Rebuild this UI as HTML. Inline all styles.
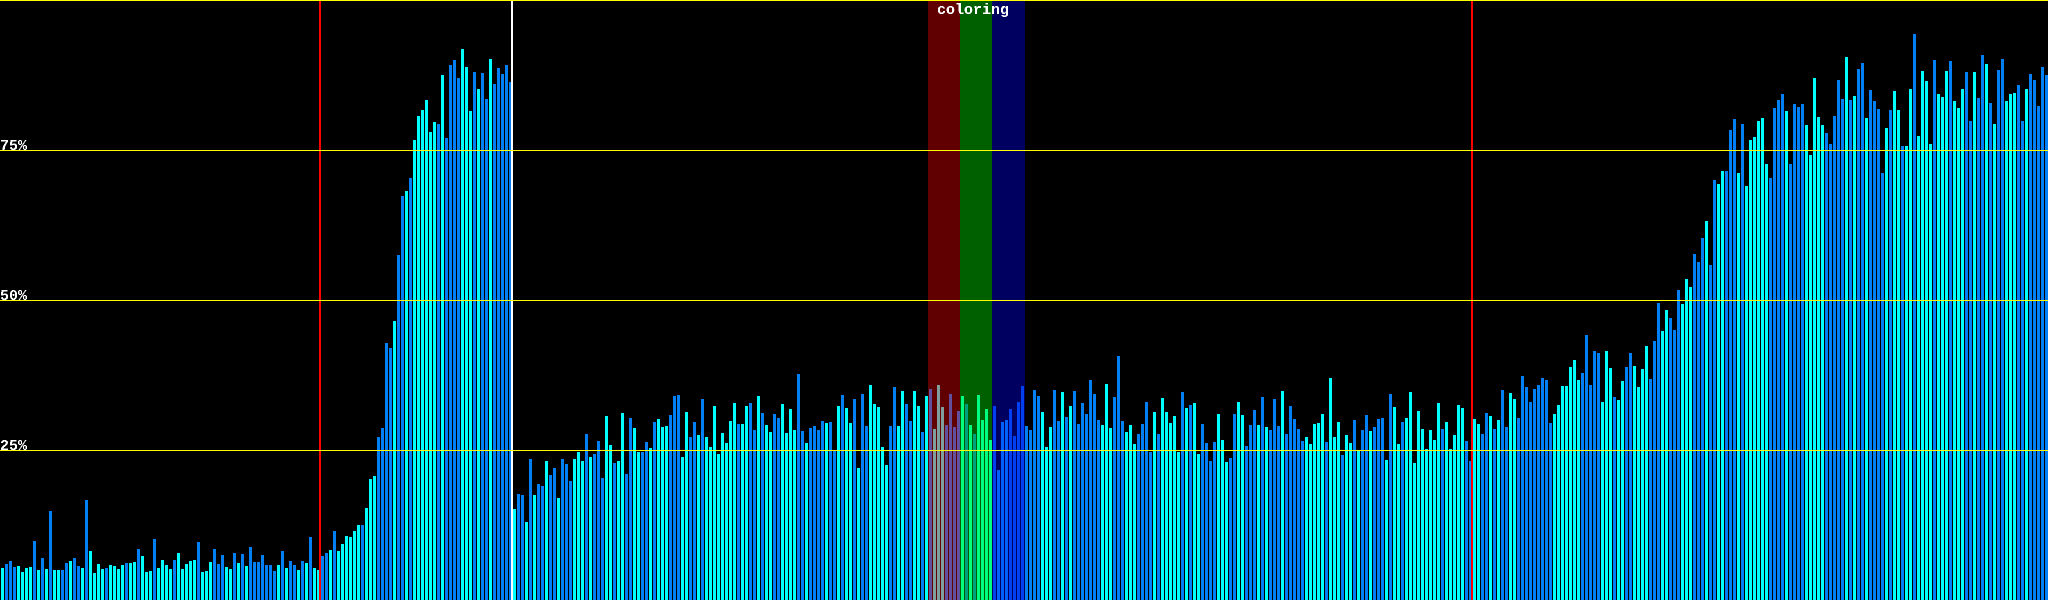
<!DOCTYPE html>
<html lang="en"><head><meta charset="utf-8"><title>coloring</title>
<style>
html,body{margin:0;padding:0;background:#000;width:2048px;height:600px;overflow:hidden}
svg{display:block;position:absolute;left:0;top:0}
text{font-family:"Liberation Mono",monospace;font-size:15px;font-weight:bold;fill:#fff}
</style></head><body>
<svg width="2048" height="600" viewBox="0 0 2048 600" xmlns="http://www.w3.org/2000/svg">
<defs><filter id="t" x="0" y="0" width="100%" height="100%" color-interpolation-filters="sRGB"><feComponentTransfer><feFuncA type="discrete" tableValues="0 1"/></feComponentTransfer></filter></defs>
<rect width="2048" height="600" fill="#000"/>
<rect x="928" y="1" width="32" height="599" fill="#600000"/>
<rect x="960" y="1" width="32" height="599" fill="#006000"/>
<rect x="992" y="1" width="33" height="599" fill="#000060"/>
<g transform="translate(2.5 0)" fill="none" stroke-width="3" shape-rendering="crispEdges">
<path stroke="#00ffff" d="M0 568V600M16 566V600M20 572V600M24 568V600M28 567V600M36 570V600M44 569V600M52 570V600M56 570V600M68 561V600M80 568V600M88 551V600M92 573V600M96 564V600M100 569V600M108 565V600M112 566V600M116 569V600M120 565V600M128 563V600M132 562V600M140 556V600M144 572V600M148 571V600M156 568V600M160 560V600M164 565V600M168 569V600M176 553V600M180 569V600M184 564V600M188 561V600M192 560V600M200 572V600M204 571V600M208 562V600M224 567V600M228 569V600M236 563V600M244 566V600M276 565V600M284 568V600M296 570V600M304 563V600M312 568V600M316 570V600M328 550V600M336 551V600M340 544V600M344 536V600M348 537V600M352 531V600M356 525V600M364 508V600M368 479V600M372 476V600M392 321V600M404 191V600M412 140V600M416 116V600M420 110V600M424 100V600M428 132V600M432 122V600M440 75V600M460 49V600M464 67V600M468 111V600M476 89V600M488 59V600M512 509V600M524 522V600M532 495V600M544 461V600M556 498V600M572 459V600M576 452V600M580 461V600M588 457V600M604 416V600M608 445V600M616 461V600M620 413V600M632 428V600M636 452V600M648 448V600M656 419V600M660 427V600M664 426V600M680 457V600M684 412V600M696 435V600M704 437V600M708 447V600M712 406V600M716 454V600M720 433V600M724 443V600M728 421V600M732 403V600M740 424V600M744 406V600M756 396V600M764 425V600M768 432V600M780 404V600M784 433V600M788 409V600M792 430V600M804 443V600M824 423V600M836 406V600M844 408V600M848 423V600M856 468V600M868 385V600M872 404V600M876 407V600M880 447V600M884 465V600M896 426V600M900 391V600M912 391V600M916 406V600M924 396V600M1040 412V600M1044 447V600M1048 427V600M1060 392V600M1068 406V600M1100 425V600M1104 384V600M1108 428V600M1124 432V600M1128 425V600M1132 444V600M1152 412V600M1160 398V600M1164 412V600M1168 423V600M1172 416V600M1176 452V600M1184 408V600M1192 403V600M1196 454V600M1216 414V600M1220 440V600M1224 462V600M1236 402V600M1240 415V600M1256 425V600M1264 427V600M1280 391V600M1304 437V600M1308 444V600M1312 424V600M1316 423V600M1320 414V600M1328 378V600M1332 437V600M1336 422V600M1344 435V600M1348 443V600M1356 450V600M1368 431V600M1384 460V600M1392 407V600M1396 444V600M1404 418V600M1408 392V600M1412 463V600M1416 411V600M1420 429V600M1424 449V600M1428 430V600M1432 440V600M1436 403V600M1444 422V600M1448 449V600M1452 435V600M1456 405V600M1460 408V600M1472 419V600M1476 424V600M1488 416V600M1496 420V600M1508 393V600M1512 399V600M1552 414V600M1556 405V600M1560 386V600M1564 386V600M1568 367V600M1572 360V600M1576 380V600M1600 402V600M1604 351V600M1608 368V600M1616 400V600M1620 381V600M1632 366V600M1636 387V600M1640 369V600M1644 346V600M1660 331V600M1664 310V600M1680 304V600M1684 279V600M1688 287V600M1704 221V600M1716 184V600M1720 171V600M1736 173V600M1744 186V600M1748 140V600M1752 137V600M1756 121V600M1760 118V600M1764 164V600M1784 111V600M1804 125V600M1808 155V600M1812 78V600M1816 117V600M1820 125V600M1844 57V600M1852 96V600M1864 118V600M1884 128V600M1892 91V600M1896 110V600M1904 146V600M1908 89V600M1916 136V600M1920 71V600M1924 81V600M1928 144V600M1936 94V600M1940 97V600M1944 71V600M1952 101V600M1956 108V600M1960 89V600M1972 72V600M1984 64V600M1992 124V600M2004 101V600M2008 94V600M2012 93V600M2024 89V600"/>
<path stroke="#0080f4" d="M4 564V600M8 561V600M12 567V600M32 541V600M40 558V600M48 511V600M60 570V600M64 563V600M72 558V600M76 566V600M84 500V600M104 568V600M124 563V600M136 549V600M152 539V600M172 560V600M196 542V600M212 549V600M216 564V600M220 555V600M232 553V600M240 554V600M248 547V600M252 562V600M256 562V600M260 555V600M264 565V600M268 565V600M272 571V600M280 551V600M288 561V600M292 565V600M300 561V600M308 537V600M320 556V600M324 553V600M332 531V600M360 525V600M376 437V600M380 428V600M384 343V600M388 348V600M396 255V600M400 196V600M408 178V600M436 124V600M444 138V600M448 65V600M452 60V600M456 78V600M472 72V600M480 73V600M484 99V600M492 84V600M496 68V600M500 74V600M504 65V600M508 82V600M516 494V600M520 495V600M528 459V600M536 484V600M540 486V600M548 475V600M552 468V600M560 459V600M564 464V600M568 481V600M584 434V600M592 454V600M596 441V600M600 478V600M612 463V600M624 474V600M628 418V600M640 452V600M644 442V600M652 422V600M668 415V600M672 396V600M676 395V600M688 437V600M692 422V600M700 399V600M736 424V600M748 403V600M752 430V600M760 413V600M772 414V600M776 418V600M796 374V600M800 431V600M808 428V600M812 426V600M816 430V600M820 421V600M828 422V600M832 451V600M840 395V600M852 399V600M860 394V600M864 426V600M888 426V600M892 387V600M904 404V600M908 421V600M920 432V600M1024 426V600M1028 430V600M1032 390V600M1036 396V600M1052 390V600M1056 421V600M1064 417V600M1072 391V600M1076 424V600M1080 403V600M1084 414V600M1088 380V600M1092 394V600M1096 420V600M1112 397V600M1116 356V600M1120 421V600M1136 434V600M1140 424V600M1144 402V600M1148 452V600M1156 434V600M1180 392V600M1188 405V600M1200 424V600M1204 443V600M1208 461V600M1212 442V600M1228 458V600M1232 414V600M1244 446V600M1248 425V600M1252 410V600M1260 397V600M1268 430V600M1272 399V600M1276 426V600M1284 434V600M1288 406V600M1292 419V600M1296 429V600M1300 441V600M1324 442V600M1340 455V600M1352 420V600M1360 430V600M1364 415V600M1372 427V600M1376 419V600M1380 418V600M1388 394V600M1400 422V600M1440 429V600M1464 441V600M1468 461V600M1480 434V600M1484 413V600M1492 429V600M1500 390V600M1504 427V600M1516 418V600M1520 376V600M1524 387V600M1528 402V600M1532 389V600M1536 385V600M1540 378V600M1544 380V600M1548 423V600M1580 373V600M1584 335V600M1588 385V600M1592 351V600M1596 353V600M1612 397V600M1624 367V600M1628 353V600M1648 379V600M1652 341V600M1656 303V600M1668 318V600M1672 330V600M1676 290V600M1692 254V600M1696 262V600M1700 238V600M1708 265V600M1712 180V600M1724 171V600M1728 130V600M1732 119V600M1740 124V600M1768 178V600M1772 108V600M1776 100V600M1780 94V600M1788 164V600M1792 104V600M1796 107V600M1800 104V600M1824 133V600M1828 144V600M1832 116V600M1836 80V600M1840 99V600M1848 100V600M1856 69V600M1860 63V600M1868 90V600M1872 101V600M1876 109V600M1880 173V600M1888 110V600M1900 146V600M1912 34V600M1932 60V600M1948 61V600M1964 72V600M1968 121V600M1976 98V600M1980 55V600M1988 103V600M1996 70V600M2000 59V600M2016 85V600M2020 121V600M2028 74V600M2032 80V600M2036 106V600M2040 67V600M2044 75V600"/>
<path stroke="#7f9f9f" d="M932 429V600M936 385V600M940 407V600"/>
<path stroke="#60509f" d="M928 389V600M944 425V600M948 394V600M952 427V600M956 411V600"/>
<path stroke="#00ff80" d="M960 396V600M968 425V600M976 395V600M980 420V600M984 409V600M988 440V600"/>
<path stroke="#00a080" d="M964 404V600M972 434V600"/>
<path stroke="#0060ff" d="M996 470V600M1000 422V600M1004 420V600"/>
<path stroke="#0040f0" d="M992 406V600M1008 409V600M1012 436V600M1016 402V600M1020 386V600"/>
</g>
<g shape-rendering="crispEdges">
<rect x="319" y="0" width="2" height="600" fill="#ff0000"/>
<rect x="1471" y="0" width="2" height="600" fill="#ff0000"/>
<rect x="511" y="0" width="2" height="600" fill="#ffffff"/>
<rect x="0" y="0" width="2048" height="1" fill="#ffff00"/>
<rect x="0" y="150" width="2048" height="1" fill="#ffff00"/>
<rect x="0" y="300" width="2048" height="1" fill="#ffff00"/>
<rect x="0" y="450" width="2048" height="1" fill="#ffff00"/>
</g>
<g filter="url(#t)">
<text x="937" y="14">coloring</text>
<text x="0" y="150">75%</text>
<text x="0" y="300">50%</text>
<text x="0" y="450">25%</text>
</g>
</svg>
</body></html>
